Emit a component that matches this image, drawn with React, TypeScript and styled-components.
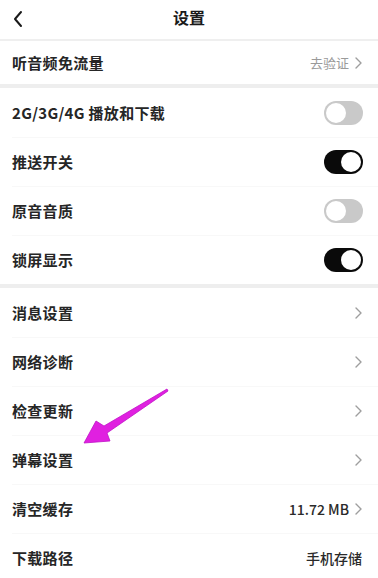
import styled, { createGlobalStyle } from 'styled-components';

const GlobalStyle = createGlobalStyle`
	html, body {
		margin: 0;
		padding: 0;
		background: #ffffff;
	}
	body {
		font-family: "Noto Sans CJK SC", "Noto Sans", sans-serif;
		color: #1f1f1f;
	}
`;

const Page = styled.div`
	position: relative;
	width: 378px;
	height: 578px;
	overflow: hidden;
	background: #ffffff;
`;

const Header = styled.div`
	height: 41px;
	display: flex;
	align-items: center;
	justify-content: center;
	position: relative;
	padding-bottom: 6px;
	box-sizing: border-box;
	border-bottom: 2px solid #efefef;
`;

const BackButton = styled.div`
	position: absolute;
	left: 12px;
	top: 9px;
	width: 14px;
	height: 18px;
`;

const Title = styled.h1`
	margin: 0;
	font-size: 16px;
	font-weight: 600;
	color: #1a1a1a;
`;

const Group = styled.div<{ $last?: boolean }>`
	border-bottom: ${(p) => (p.$last ? 'none' : '4px solid #eeeeee')};
`;

const Row = styled.div<{ $h: number }>`
	height: ${(p) => p.$h}px;
	display: flex;
	align-items: center;
	justify-content: space-between;
	padding: 0 16px 0 12px;
	position: relative;

	& + &::before {
		content: '';
		position: absolute;
		left: 12px;
		right: 0;
		top: 0;
		border-top: 1px solid #f8f8f8;
	}
`;

const Label = styled.span`
	font-size: 15px;
	font-weight: 600;
	color: #262626;
	letter-spacing: 0.3px;
`;

const Right = styled.div`
	display: flex;
	align-items: center;
	gap: 6px;
`;

const Value = styled.span<{ $muted?: boolean }>`
	font-size: ${(p) => (p.$muted ? '13px' : '14px')};
	color: ${(p) => (p.$muted ? '#9a9a9a' : '#2a2a2a')};
	font-weight: ${(p) => (p.$muted ? 400 : 500)};
`;

const Track = styled.div<{ $on: boolean }>`
	width: 39px;
	height: 24px;
	border-radius: 12px;
	background: ${(p) => (p.$on ? '#0a0a0a' : '#c9c9c9')};
	display: flex;
	align-items: center;
	justify-content: ${(p) => (p.$on ? 'flex-end' : 'flex-start')};
	padding: 0 2px;
	box-sizing: border-box;
	margin-right: -1px;
`;

const Knob = styled.div`
	width: 20px;
	height: 20px;
	border-radius: 50%;
	background: #ffffff;
`;

const ArrowOverlay = styled.svg`
	position: absolute;
	left: 0;
	top: 0;
	pointer-events: none;
`;

function Chevron() {
	return (
		<svg width="7" height="12" viewBox="0 0 7 12">
			<polyline points="1,1 6,6 1,11" fill="none" stroke="#9e9e9e" strokeWidth="1.4" strokeLinecap="round" strokeLinejoin="round" />
		</svg>
	);
}

function Toggle({ on }: { on: boolean }) {
	return (
		<Track $on={on}>
			<Knob />
		</Track>
	);
}

const toggles = [
	{ label: '2G/3G/4G 播放和下载', on: false },
	{ label: '推送开关', on: true },
	{ label: '原音音质', on: false },
	{ label: '锁屏显示', on: true },
];

const links: { label: string; value?: string; chevron: boolean }[] = [
	{ label: '消息设置', chevron: true },
	{ label: '网络诊断', chevron: true },
	{ label: '检查更新', chevron: true },
	{ label: '弹幕设置', chevron: true },
	{ label: '清空缓存', value: '11.72 MB', chevron: true },
	{ label: '下载路径', value: '手机存储', chevron: false },
];

export default function App() {
	return (
		<Page>
			<GlobalStyle />
			<Header>
				<BackButton>
					<svg width="14" height="18" viewBox="0 0 14 18">
						<polyline points="9,2 3,9 9,16" fill="none" stroke="#1a1a1a" strokeWidth="2" strokeLinecap="round" strokeLinejoin="round" />
					</svg>
				</BackButton>
				<Title>设置</Title>
			</Header>
			<Group>
				<Row $h={43}>
					<Label>听音频免流量</Label>
					<Right>
						<Value $muted>去验证</Value>
						<Chevron />
					</Right>
				</Row>
			</Group>
			<Group>
				{toggles.map((t) => (
					<Row $h={49} key={t.label}>
						<Label>{t.label}</Label>
						<Toggle on={t.on} />
					</Row>
				))}
			</Group>
			<Group $last>
				{links.map((l) => (
					<Row $h={49} key={l.label}>
						<Label>{l.label}</Label>
						<Right>
							{l.value && <Value>{l.value}</Value>}
							{l.chevron && <Chevron />}
						</Right>
					</Row>
				))}
			</Group>
			<ArrowOverlay width="378" height="578" viewBox="0 0 378 578">
				<polygon
					points="167,389 104,426 96,421 84,443 110,441 107,433 168,391"
					fill="#e020e0"
					stroke="#c010c8"
					strokeWidth="0.8"
					strokeLinejoin="round"
				/>
			</ArrowOverlay>
		</Page>
	);
}
